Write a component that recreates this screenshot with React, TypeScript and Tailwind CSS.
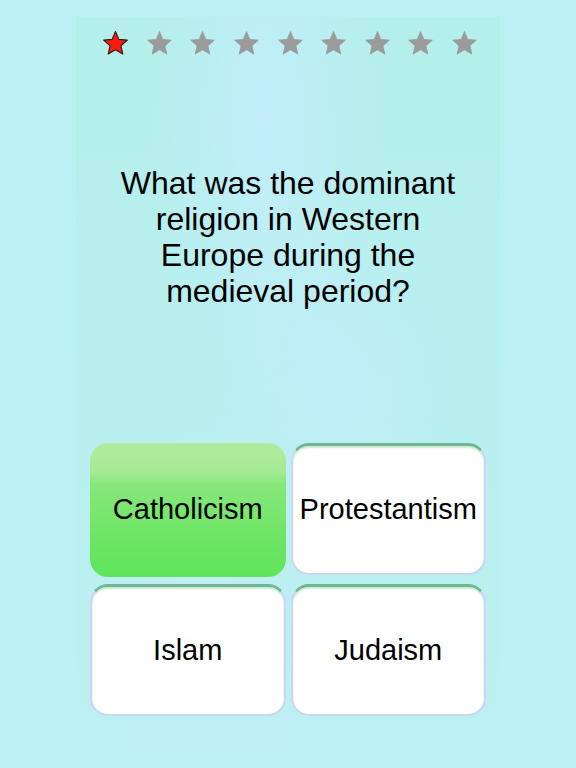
import React from 'react'

const answers = [
  { label: 'Catholicism', correct: true },
  { label: 'Protestantism', correct: false },
  { label: 'Islam', correct: false },
  { label: 'Judaism', correct: false },
]

function Star({ active }: { active: boolean }) {
  const color = active ? '#ff1a0e' : '#9b9b9b'
  return (
    <svg width="27" height="27" viewBox="-1 -1 26 26" className="shrink-0">
      <path
        d="M12 0.5L15.23 8.05L23.41 8.79L17.23 14.2L19.05 22.21L12 18L4.95 22.21L6.77 14.2L0.59 8.79L8.77 8.05Z"
        fill={color}
        stroke={active ? '#2a1a1a' : color}
        strokeWidth={active ? 1.1 : 0.8}
        strokeLinejoin="round"
      />
    </svg>
  )
}

function AnswerButton({ label, correct }: { label: string; correct: boolean }) {
  if (correct) {
    return (
      <button
        type="button"
        className="flex h-[134px] items-center justify-center rounded-[18px] bg-[linear-gradient(180deg,#b0ec9f_0%,#a4ea93_22%,#88e77c_30%,#74e66a_60%,#5fe45a_100%)] text-[29px] text-black"
      >
        {label}
      </button>
    )
  }
  return (
    <button
      type="button"
      className="flex h-[132px] items-center justify-center rounded-[18px] border-2 border-t-[3px] border-[#c9d7ef] border-t-[#6fb78e] bg-white text-[29px] text-black shadow-[inset_0_2px_2px_rgba(111,183,142,0.35)]"
    >
      {label}
    </button>
  )
}

export default function App() {
  return (
    <main className="flex min-h-[768px] w-[576px] justify-center bg-[#bdf0f2] pt-[17px] font-['Liberation_Sans',Arial,sans-serif]">
      <section className="flex h-[733px] w-[424px] flex-col bg-[#bcf0f0] bg-[radial-gradient(ellipse_at_45%_14%,#c2eefa_0%,transparent_35%),radial-gradient(ellipse_at_62%_50%,#c0eef8_0%,transparent_35%),radial-gradient(ellipse_at_30%_85%,#c1eef8_0%,transparent_30%),linear-gradient(180deg,#b4efeb_0%,#bcf0f2_100%)]">
        <div className="flex items-center justify-between pl-[26px] pr-[22px] pt-[13px]">
          {Array.from({ length: 9 }).map((_, i) => (
            <Star key={i} active={i === 0} />
          ))}
        </div>
        <h1 className="mt-[108px] px-4 text-center text-[32px] leading-[36px] text-black">
          What was the dominant
          <br />
          religion in Western
          <br />
          Europe during the
          <br />
          medieval period?
        </h1>
        <div className="mt-[134px] grid grid-cols-2 gap-x-[5px] gap-y-[7px] px-[14px]">
          {answers.map(a => (
            <AnswerButton key={a.label} label={a.label} correct={a.correct} />
          ))}
        </div>
      </section>
    </main>
  )
}
